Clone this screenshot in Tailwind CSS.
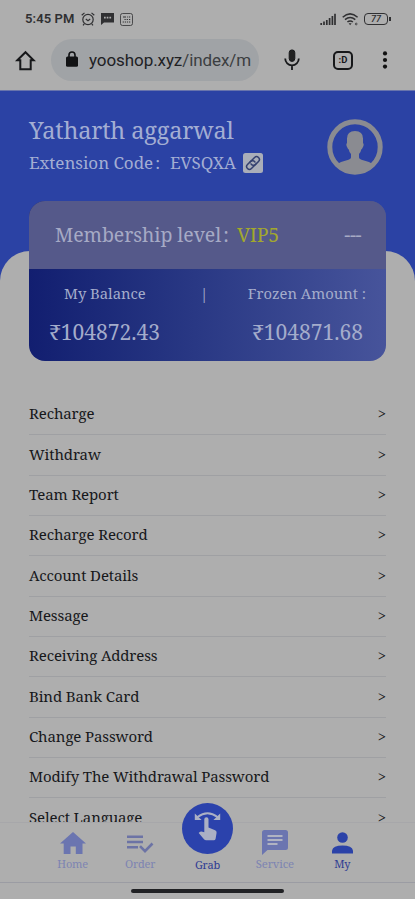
<!DOCTYPE html>
<html lang="en"><head><meta charset="utf-8"><meta name="viewport" content="width=device-width"><title>My account</title>
<script src="https://cdn.jsdelivr.net/npm/@tailwindcss/browser@4"></script></head>
<body class="w-[415px] h-[899px] overflow-hidden bg-[#aeaeae] font-['Noto_Serif','DejaVu_Serif_Condensed','DejaVu_Serif',serif] [font-stretch:condensed] text-[#17181b] flex flex-col whitespace-nowrap">
<!-- status bar -->
<header class="h-[91px] shrink-0 border-b border-[#6874ac] font-[Roboto,sans-serif] [font-stretch:normal]">
 <div class="h-[38px] pl-[25px] pr-[24px] flex items-center text-[#303032]">
  <span class="w-[50px] text-[13px] font-semibold tracking-[0.1px]">5:45 PM</span>
  <svg class="ml-[6px] w-[14px] h-[14px]" viewBox="0 0 14 14" fill="none" stroke="currentColor" stroke-width="1.2"><circle cx="7" cy="7.5" r="5.2"/><path d="M.7 3.3 3.5.9M13.3 3.3 10.5.9M4.8 7l2.2 1.7L9.2 7M3.2 12 2 13.3M10.8 12l1.2 1.3"/></svg>
  <svg class="ml-[6px] w-[13px] h-[12px]" viewBox="0 0 13 12"><path d="M0 0h13v9.5H3L0 12z" fill="currentColor"/><path d="M3 4.7h1.7M5.7 4.7h1.7M8.4 4.7h1.7" stroke="#aeaeae" stroke-width="1.7"/></svg>
  <svg class="ml-[6px] w-[13px] h-[13px]" viewBox="0 0 13 13" fill="none" stroke="currentColor"><rect x=".5" y=".5" width="12" height="12" rx="2" stroke-width=".8"/><path d="M3 4h3M7.200 4h1M9 4h1.2M4.500 6.500h1.2M6.700 6.500h1.2M9 6.500h1.2M2.700 9h1.2M4.800 9h1.2M6.900 9h1.2M9 9h1.2" stroke-width="1.2"/></svg>
  <svg class="ml-auto w-[16px] h-[12px]" viewBox="0 0 16 12" stroke="currentColor" stroke-width="1.7"><path d="M1.2 12v-2M4 12V8.5M6.8 12V7M9.6 12V5M12.4 12V3M15 12V.7"/></svg>
  <svg class="ml-[6px] w-[17px] h-[13px]" viewBox="0 0 17 13" fill="none" stroke="currentColor" stroke-width="1.5"><path d="M.7 4.2Q8-2.5 15.6 4.2M3 6.7q5.1-4.2 10.3 0M5.4 9q2.8-2.2 5.5 0"/><path d="m6.6 10.3 1.5 1.9 1.5-1.9z" fill="currentColor" stroke="none"/><circle cx="14.2" cy="11" r=".9" stroke-width=".8"/></svg>
  <div class="ml-[5px] w-[24px] h-[12px] border-[1.5px] border-current rounded-[4px] flex items-center justify-center text-[9px] leading-none font-medium italic">77</div><i class="w-[2px] h-[4px] bg-[#303032] ml-px"></i>
 </div>
 <div class="flex items-center h-[44px]">
  <svg class="shrink-0 ml-[15px] w-[21px] h-[21px]" viewBox="0 0 21 21" fill="none" stroke="#17181a" stroke-width="2"><path d="M2.3 10.3 10.5 2.2l8.2 8.1h-3v8.9H5.3v-8.9z"/></svg>
  <div class="shrink-0 ml-[15px] w-[208px] h-[42px] rounded-full bg-[#a0a3a6] flex items-center pl-[15px] text-[17px] tracking-[-0.08px] text-[#202124]">
   <svg class="shrink-0 w-[12px] h-[16px] mr-[11px] mb-[2px]" viewBox="0 0 12 16"><rect y="5.5" width="12" height="10.2" rx="1.5" fill="#111214"/><path d="M3 6V4a3 3 0 0 1 6 0v2" fill="none" stroke="#111214" stroke-width="1.6"/></svg>
   <span class="pt-[2px]">yooshop.xyz<span class="text-[#3b3e41]">/index/m</span></span></div>
  <svg class="shrink-0 ml-[25px] w-[16px] h-[22px]" viewBox="0 0 16 22" fill="none" stroke="#17181a" stroke-width="1.8"><rect x="5.2" y=".9" width="5.6" height="11.5" rx="2.8" fill="#222" stroke-width="1"/><path d="M1.2 9.5a6.8 6.8 0 0 0 13.6 0M8 16.5V21"/></svg>
  <div class="shrink-0 ml-[33px] w-[20px] h-[19px] border-2 border-[#17181a] rounded-[5px] flex items-center justify-center text-[9.5px] leading-none font-bold">:D</div>
  <svg class="shrink-0 ml-[29px] w-[6px] h-[18px]" viewBox="0 0 6 18" fill="#111"><circle cx="3" cy="2.4" r="2.1"/><circle cx="3" cy="9" r="2.1"/><circle cx="3" cy="15.6" r="2.1"/></svg>
 </div>
</header>
<!-- profile -->
<section class="h-[160px] shrink-0 bg-[#2b42a4]">
 <div class="h-[190px] bg-[#2b42a4] text-[#a3aed3] pl-[29px] pr-[32px] pt-[24px] flex justify-between">
  <div><h1 class="text-[23.5px] leading-[30px] tracking-[-0.13px]">Yatharth aggarwal</h1>
   <div class="flex items-center mt-[5px] h-[26px] text-[17px]"><span class="w-[141px] tracking-[-0.03px]">Extension Code<span class="ml-[2px]">:</span></span><span class="w-[66px] tracking-[-0.1px]">EVSQXA</span>
    <svg class="ml-[7px] w-[20px] h-[20px]" viewBox="0 0 20 20"><rect width="20" height="20" rx="2.5" fill="#aaaeb9"/><g transform="rotate(-45 10 10)" fill="none" stroke="#34406f" stroke-width="1.5" stroke-linecap="round"><path d="M11 12.8H5a2.8 2.8 0 0 1 0-5.6h4.5a2.8 2.8 0 0 1 2.6 3.5"/><path d="M9 7.2h6a2.8 2.8 0 0 1 0 5.6h-4.5a2.8 2.8 0 0 1-2.6-3.5"/></g></svg></div></div>
  <svg class="w-[56px] h-[56px] mt-[4px]" viewBox="0 0 56 56"><defs><clipPath id="face"><circle cx="28" cy="28" r="26"/></clipPath></defs><circle cx="28" cy="28" r="25.2" fill="none" stroke="#8a8b91" stroke-width="5"/><path clip-path="url(#face)" fill="#8a8b91" d="M20 19.500q0-7.500 8-7.500t8 7.500v4.500q1.200 1 .2 3.500t-2 3q-.4 3-2.200 4.500v3.500q0 1.500 2.500 2.300l7.500 2.200q4 1.500 6 4.500V56H8v-8q2-3.500 6-5l7.500-2.200q2.500-.8 2.500-2.300V35q-1.800-1.500-2.200-4.500-1-.5-2-3t.2-3.500z"/></svg>
 </div>
</section>
<main class="relative h-[571px] shrink-0 bg-[#2b42a4]">
 <div class="h-full rounded-t-[30px] bg-[#aeaeae] px-[29px]">
 <!-- membership card overlaps the profile -->
 <section class="relative -top-[50px] h-[160px] rounded-[16px] overflow-hidden bg-linear-to-r from-[#121e70] to-[#47549b] text-[#a4accb]">
  <div class="h-[68px] bg-[#55598a] pl-[26px] pr-[25px] pb-[1px] flex items-center text-[19.5px] text-[#a6aac5]"><span class="w-[182px] tracking-[-0.08px]">Membership level<span class="ml-[2px]">:</span></span><span class="text-[#a2a82d] tracking-[-0.3px]">VIP5</span><span class="ml-auto tracking-[-0.5px]">---</span></div>
  <div class="flex items-center h-[22px] mt-[13px] pl-[35px] pr-[20px] text-[14.8px]"><span class="w-[136px]">My Balance</span><span>|</span><span class="ml-auto">Frozen Amount :</span></div>
  <div class="flex justify-between items-center h-[30px] mt-[14px] pl-[20px] pr-[23px] text-[21px]"><span>₹104872.43</span><span>₹104871.68</span></div>
 </section>
 <ul class="-mt-[16px] text-[15px] tracking-[-0.12px]">
  <li class="h-[40.33px] pb-[2px] border-b border-[#9fa0a3] flex items-center justify-between"><span>Recharge</span><span>&gt;</span></li>
  <li class="h-[40.33px] pb-[2px] border-b border-[#9fa0a3] flex items-center justify-between"><span>Withdraw</span><span>&gt;</span></li>
  <li class="h-[40.33px] pb-[2px] border-b border-[#9fa0a3] flex items-center justify-between"><span>Team Report</span><span>&gt;</span></li>
  <li class="h-[40.33px] pb-[2px] border-b border-[#9fa0a3] flex items-center justify-between"><span>Recharge Record</span><span>&gt;</span></li>
  <li class="h-[40.33px] pb-[2px] border-b border-[#9fa0a3] flex items-center justify-between"><span>Account Details</span><span>&gt;</span></li>
  <li class="h-[40.33px] pb-[2px] border-b border-[#9fa0a3] flex items-center justify-between"><span>Message</span><span>&gt;</span></li>
  <li class="h-[40.33px] pb-[2px] border-b border-[#9fa0a3] flex items-center justify-between"><span>Receiving Address</span><span>&gt;</span></li>
  <li class="h-[40.33px] pb-[2px] border-b border-[#9fa0a3] flex items-center justify-between"><span>Bind Bank Card</span><span>&gt;</span></li>
  <li class="h-[40.33px] pb-[2px] border-b border-[#9fa0a3] flex items-center justify-between"><span>Change Password</span><span>&gt;</span></li>
  <li class="h-[40.33px] pb-[2px] border-b border-[#9fa0a3] flex items-center justify-between"><span>Modify The Withdrawal Password</span><span>&gt;</span></li>
  <li class="h-[40.33px] pb-[2px] flex items-center justify-between"><span>Select Language</span><span>&gt;</span></li>
 </ul>
 </div>
</main>
<!-- tab bar -->
<nav class="relative h-[61px] shrink-0 bg-[#aeaeae] border-t border-[#a7a7aa] border-b border-b-[#9b9ca3] px-[39px] grid grid-cols-5 justify-items-center text-[11px] leading-[14px] tracking-[-0.15px] text-[#7d84b2]">
 <div class="flex flex-col items-center w-[67px]"><svg class="mt-[9px] w-[26px] h-[22px]" viewBox="0 0 26 22" fill="#6b75b0"><path d="M13 0 26 11.5h-3.5V22h-6.7v-7.5h-5.3V22H3.7V11.5H0z"/></svg><span class="mt-[3px]">Home</span></div>
 <div class="flex flex-col items-center w-[67px]"><svg class="mt-[12px] w-[28px] h-[19px]" viewBox="0 0 28 19" fill="none" stroke="#6c73a5" stroke-width="2.6"><path d="M1 1.8h16M1 7h16M1 12.2h11M14 11.2l5 5L26.5 8.5"/></svg><span class="mt-[3px]">Order</span></div>
 <div class="relative -top-[20px] flex flex-col items-center w-[67px] text-[#303c93]"><svg class="w-[51px] h-[51px]" viewBox="0 0 51 51"><circle cx="25.5" cy="25.5" r="25.5" fill="#2b42ac"/><g fill="#abb0c4"><path d="M15.500 14q10-7.500 20 0" fill="none" stroke="#abb0c4" stroke-width="2"/><path d="M12.800 10.500V17h6.800zM38.200 10.500V17h-6.800z"/><path d="M22.300 16.200q0-2 2.100-2t2.100 2v8.300l6.600 2.700q1.700.8 1.500 2.500l-1 6q-.3 1.500-1.800 1.500h-7.800q-1 0-1.800-.8l-5.500-6.300 1-1.200q.6-.6 1.600-.5l3 .8z"/></g></svg><span class="mt-[4px]">Grab</span></div>
 <div class="flex flex-col items-center w-[67px]"><svg class="mt-[7px] w-[26px] h-[25px]" viewBox="0 0 26 25"><path fill="#6b75b0" d="M2.5 0h21Q26 0 26 2.5V17.500q0 2.500-2.500 2.500h-18L0 25V2.500Q0 0 2.500 0"/><path d="M5.500 6h15M5.500 10h15M5.500 14h10" stroke="#b0b3c2" stroke-width="2"/></svg><span class="mt-[2px] text-[11.3px]">Service</span></div>
 <div class="flex flex-col items-center w-[67px] text-[#303c93]"><svg class="mt-[9px] w-[21px] h-[22px]" viewBox="0 0 21 22" fill="#2b42a8"><circle cx="10.5" cy="5.5" r="5.3"/><path d="M0 21.500V18.500Q1 13.500 10.500 13.500T21 18.500v3z"/></svg><span class="mt-[3px]">My</span></div>
</nav>
<footer class="flex-1 flex justify-center pt-[6px]"><div class="w-[153px] h-[4px] rounded-full bg-[#202124]"></div></footer>
</body></html>
